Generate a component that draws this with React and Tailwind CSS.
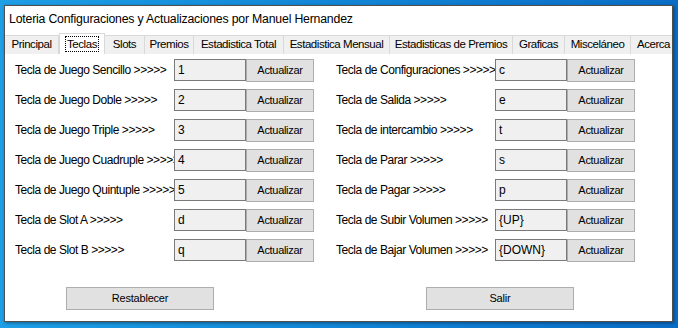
import React from 'react';

const leftRows = [
  ['Tecla de Juego Sencillo >>>>>', '1'],
  ['Tecla de Juego Doble >>>>>', '2'],
  ['Tecla de Juego Triple >>>>>', '3'],
  ['Tecla de Juego Cuadruple >>>>>', '4'],
  ['Tecla de Juego Quintuple >>>>>', '5'],
  ['Tecla de Slot A >>>>>', 'd'],
  ['Tecla de Slot B >>>>>', 'q'],
];

const rightRows = [
  ['Tecla de Configuraciones >>>>>', 'c'],
  ['Tecla de Salida >>>>>', 'e'],
  ['Tecla de intercambio >>>>>', 't'],
  ['Tecla de Parar >>>>>', 's'],
  ['Tecla de Pagar >>>>>', 'p'],
  ['Tecla de Subir Volumen >>>>>', '{UP}'],
  ['Tecla de Bajar Volumen >>>>>', '{DOWN}'],
];

const tabs = [
  ['Principal', 'w-[54px]'],
  ['Teclas', 'w-[46px]'],
  ['Slots', 'w-[40px]'],
  ['Premios', 'w-[49px]'],
  ['Estadistica Total', 'w-[90px]'],
  ['Estadistica Mensual', 'w-[106px]'],
  ['Estadisticas de Premios', 'w-[123px]'],
  ['Graficas', 'w-[52px]'],
  ['Misceláneo', 'w-[66px]'],
  ['Acerca', 'w-[46px]'],
];

const font = { fontFamily: '"Liberation Sans", Arial, sans-serif' };

const KeyRow = ({ label, value }) => (
  <div className="flex items-center h-[30px]">
    <span className="w-[159px] text-[12px] tracking-[-0.45px] text-black whitespace-nowrap">{label}</span>
    <div className="w-[72px] h-[22px] bg-[#f0f0f0] border border-[#7a7a7a] flex items-center pl-[3px] text-[12px] text-black">
      {value}
    </div>
    <button className="w-[68px] h-[23px] bg-[#e1e1e1] border border-[#adadad] text-[11px] tracking-[-0.3px] text-black">
      Actualizar
    </button>
  </div>
);

export default function App() {
  return (
    <div
      className="w-[678px] h-[328px] overflow-hidden bg-gradient-to-r from-[#1e9fe6] to-[#0a6cc6] pl-[4px] pt-[5px]"
      style={font}
    >
      <div className="w-[669px] h-[317px] bg-white border border-[#505050] flex flex-col shadow-[1px_1px_3px_rgba(0,0,0,0.4)]">
        <div className="h-[27px] pl-[4px] flex items-center text-[12.3px] tracking-[-0.2px] text-black">
          Loteria Configuraciones y Actualizaciones por Manuel Hernandez
        </div>

        <div className="h-[21px] flex items-end overflow-hidden">
          {tabs.map(([name, w]) =>
            name === 'Teclas' ? (
              <div key={name} className={`${w} h-[21px] shrink-0 bg-white border border-b-0 border-[#d9d9d9] flex items-center justify-center`}>
                <span className="border border-dotted border-black px-[1px] leading-[14px] text-[11.5px] tracking-[-0.4px] text-black">{name}</span>
              </div>
            ) : (
              <div key={name} className={`${w} h-[19px] shrink-0 bg-[#f0f0f0] border border-b-0 border-l-0 border-[#d9d9d9] flex items-center justify-center text-[11.5px] tracking-[-0.45px] text-black whitespace-nowrap`}>
                {name}
              </div>
            )
          )}
        </div>

        <div className="flex flex-col pl-[10px] pt-[1px]">
          <div className="flex gap-[22px]">
            <div className="flex flex-col">
              {leftRows.map(([l, v]) => (
                <KeyRow key={l} label={l} value={v} />
              ))}
            </div>
            <div className="flex flex-col">
              {rightRows.map(([l, v]) => (
                <KeyRow key={l} label={l} value={v} />
              ))}
            </div>
          </div>

          <div className="flex mt-[22px] pl-[51px] gap-[212px]">
            <button className="w-[148px] h-[23px] bg-[#e1e1e1] border border-[#adadad] text-[11px] tracking-[-0.2px] text-black">
              Restablecer
            </button>
            <button className="w-[148px] h-[23px] bg-[#e1e1e1] border border-[#adadad] text-[11px] tracking-[-0.2px] text-black">
              Salir
            </button>
          </div>
        </div>
      </div>
    </div>
  );
}
